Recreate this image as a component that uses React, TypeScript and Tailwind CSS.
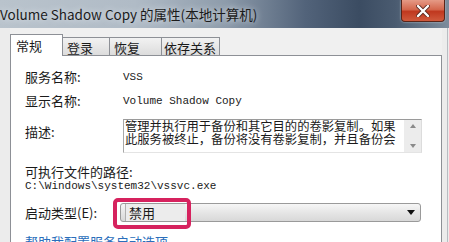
export default function App() {
  return (
    <div className="w-[449px] h-[242px] overflow-hidden bg-[#f0f0f0] flex flex-col font-['Noto_Sans_CJK_SC',sans-serif]">
      {/* title bar */}
      <div className="h-[28px] shrink-0 flex items-start bg-[linear-gradient(to_right,#b9c3cc_0%,#b0bbc6_30%,#8e9cab_50%,#52637a_68%,#3b4c62_80%,#4a5b70_88%,#7d8c9c_100%)]">
        <div className="flex-1 pt-[5px] pl-0 text-[13.5px] leading-[18px] text-[#1b1b1b] whitespace-nowrap [text-shadow:0_0_6px_#e8edf2]">
          Volume Shadow Copy 的属性(本地计算机)
        </div>
        <div className="w-[44px] h-[22px] mr-[4px] rounded-b-[4px] border border-t-0 border-[#5a2418] bg-[linear-gradient(to_bottom,#e59a86_0%,#d4674d_45%,#c0381f_55%,#d05a3d_100%)] flex items-center justify-center shadow-[0_0_2px_#c8d0d8]">
          <svg width="14" height="12" viewBox="0 0 14 12">
            <path d="M2 1 L12 11 M12 1 L2 11" stroke="#5b2a20" strokeWidth="4" strokeLinecap="round" />
            <path d="M2 1 L12 11 M12 1 L2 11" stroke="#ffffff" strokeWidth="2.4" strokeLinecap="round" />
          </svg>
        </div>
      </div>

      <div className="flex-1 flex">
        <div className="w-[10px] shrink-0 bg-[#ececec]" />
        <div className="w-[432px] shrink-0 flex flex-col">
          {/* tabs */}
          <div className="flex items-end h-[21px] mt-[6px] text-[13px] leading-[14px] text-[#1a1a1a]">
            <div className="relative z-10 w-[53px] h-[22px] -mb-[1px] bg-white border border-b-0 border-[#8d9096] pl-[5px] pt-[4px]">
              常规
            </div>
            <div className="w-[47px] h-[18px] bg-[linear-gradient(to_bottom,#f2f2f2,#dcdcdc)] border border-l-0 border-b-0 border-[#8d9096] pl-[4px] pt-[3px]">
              登录
            </div>
            <div className="w-[52px] h-[18px] bg-[linear-gradient(to_bottom,#f2f2f2,#dcdcdc)] border border-l-0 border-b-0 border-[#8d9096] pl-[4px] pt-[3px]">
              恢复
            </div>
            <div className="w-[58px] h-[18px] bg-[linear-gradient(to_bottom,#f2f2f2,#dcdcdc)] border border-l-0 border-b-0 border-[#8d9096] pl-[2px] pt-[3px]">
              依存关系
            </div>
          </div>

          {/* panel */}
          <div className="flex-1 bg-white border border-b-0 border-[#8d9096] pl-[14px] text-[13px] leading-[14px] text-[#1a1a1a]">
            <div className="flex mt-[14px]">
              <div className="w-[98px] shrink-0">服务名称:</div>
              <div className="font-['Liberation_Mono','Noto_Sans_CJK_SC',monospace] text-[11px]">VSS</div>
            </div>
            <div className="flex mt-[10px]">
              <div className="w-[98px] shrink-0">显示名称:</div>
              <div className="font-['Liberation_Mono','Noto_Sans_CJK_SC',monospace] text-[11px]">Volume Shadow Copy</div>
            </div>
            <div className="flex mt-[11px]">
              <div className="w-[98px] shrink-0 pt-[6px]">描述:</div>
              <div className="w-[299px] h-[34px] flex border border-t-[#9a9a9a] border-l-[#a8a8a8] border-r-[#dcdcdc] border-b-[#e4e4e4]">
                <div className="flex-1 pl-[1px] text-[12.3px] leading-[13px] whitespace-nowrap">
                  <div>管理并执行用于备份和其它目的的卷影复制。如果</div>
                  <div>此服务被终止，备份将没有卷影复制，并且备份会</div>
                </div>
                <div className="w-[17px] bg-[#ececec] flex flex-col items-center justify-between py-[4px]">
                  <svg width="6" height="4" viewBox="0 0 6 4"><path d="M0 4 L3 0 L6 4 Z" fill="#8a8a8a" /></svg>
                  <svg width="6" height="4" viewBox="0 0 6 4"><path d="M0 0 L3 4 L6 0 Z" fill="#8a8a8a" /></svg>
                </div>
              </div>
            </div>
            <div className="mt-[12px]">可执行文件的路径:</div>
            <div className="font-['Liberation_Mono','Noto_Sans_CJK_SC',monospace] text-[11px] leading-[14px]">
              C:\Windows\system32\vssvc.exe
            </div>
            <div className="flex items-center mt-[10px]">
              <div className="w-[95px] shrink-0">启动类型(E):</div>
              <div className="relative w-[301px] h-[19px] rounded-[3px] border border-[#9a9a9a] bg-[linear-gradient(to_bottom,#f6f6f6,#e6e6e6_50%,#d8d8d8)] flex items-center">
                <div className="h-full w-[60px] ml-[4px] border-l border-[#b0b0b0] bg-[#ececec] pl-[3px] leading-[17px]">禁用</div>
                <div className="flex-1" />
                <svg width="8" height="5" viewBox="0 0 8 5" className="mr-[5px]"><path d="M0 0 L8 0 L4 5 Z" fill="#111111" /></svg>
                <div className="absolute left-[-8px] top-[-6px] w-[78px] h-[31px] rounded-[5px] border-[4px] border-[#d6225e]" />
              </div>
            </div>
            <div className="mt-[13px] text-[#2a6ebb] whitespace-nowrap">帮助我配置服务启动选项</div>
          </div>
        </div>
        <div className="flex-1 bg-[#ececec] flex justify-end">
          <div className="w-[1px] h-full bg-[#b8bcc2] mr-[1px]" />
        </div>
      </div>
    </div>
  );
}
